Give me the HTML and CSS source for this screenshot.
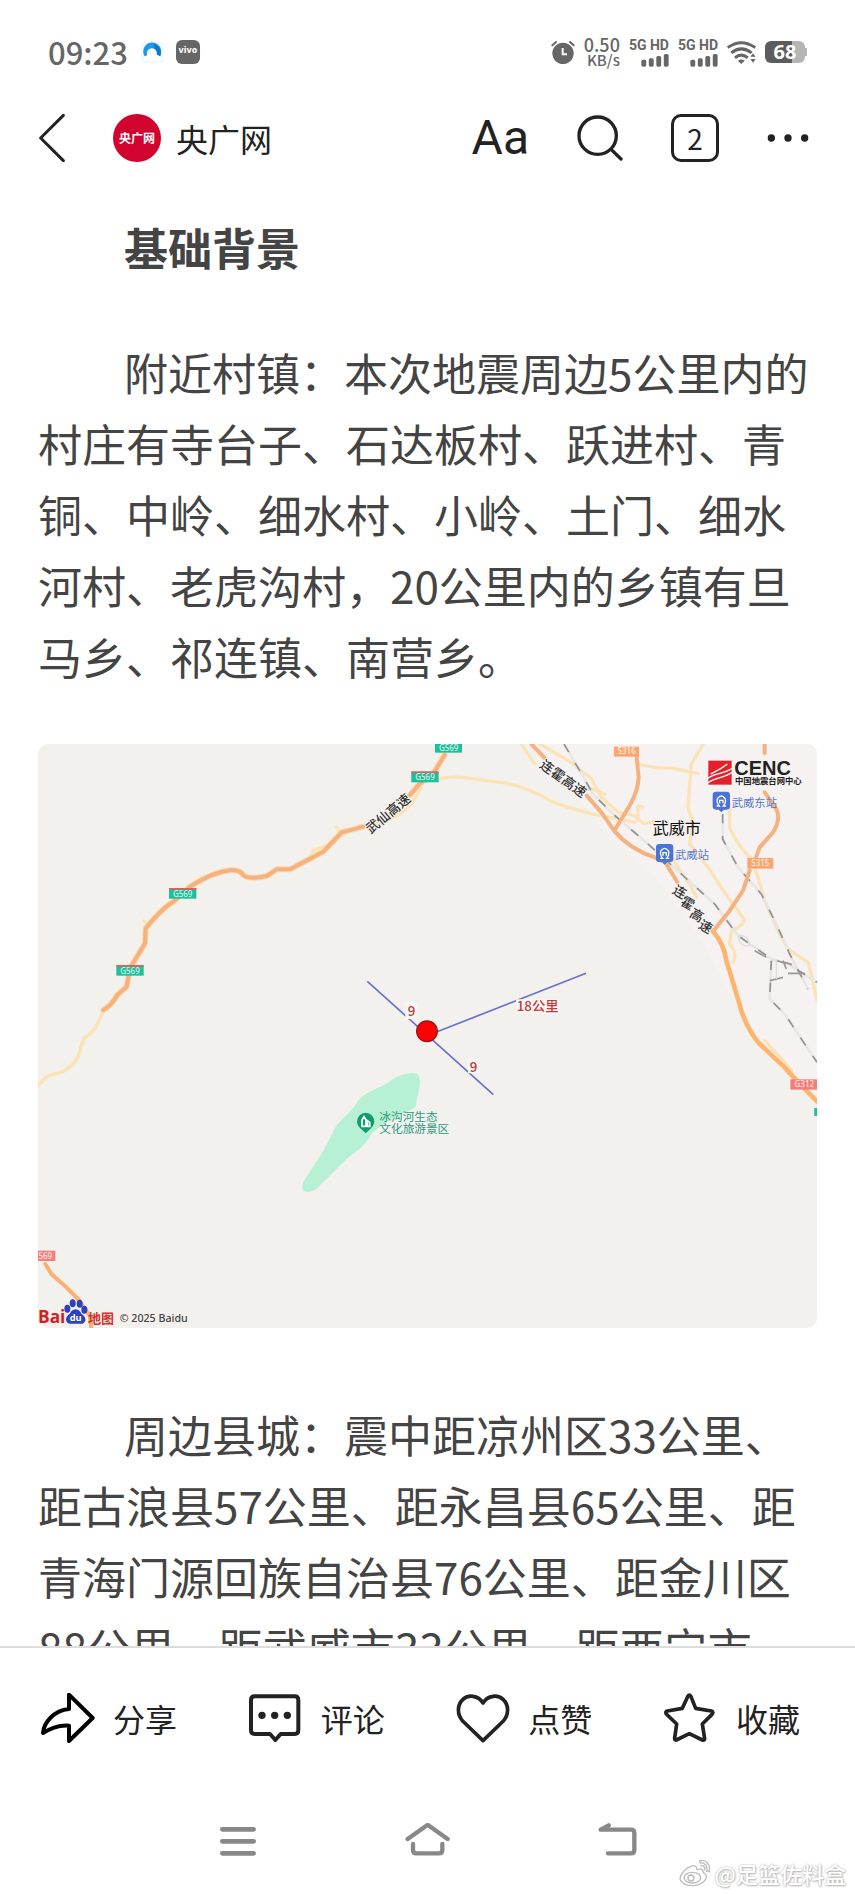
FILE: index.html
```html
<!DOCTYPE html>
<html lang="zh-CN">
<head>
<meta charset="utf-8">
<meta name="viewport" content="width=device-width">
<title>央广网</title>
<link rel="stylesheet" href="styles.css">
</head>
<body>
<div class="status">
  <div class="status-group">
    <span class="clock">09:23</span>
    <svg class="app-dot" viewBox="0 0 72 72" aria-hidden="true">
      <rect x="4" y="4" width="66" height="66" rx="8" fill="#f3f9fd"/>
      <path d="M16 52A27 27 0 1 1 60 48Z" fill="#1b9be6"/>
      <path d="M42 12A27 27 0 0 1 60 50L44 34Z" fill="#1276c8"/>
      <path d="M14 62Q6 50 22 46A15 15 0 1 1 50 44Q64 48 64 60Q60 64 50 63Z" fill="#fff"/>
    </svg>
    <span class="vivo">vivo</span>
  </div>
  <div class="status-group status-right">
    <svg class="alarm" viewBox="0 0 72 72" aria-hidden="true">
      <circle cx="36" cy="40" r="32" fill="#666"/>
      <path d="M4 16L15 6M68 16L57 6" stroke="#666" stroke-width="6" stroke-linecap="round"/>
      <path d="M35 24V43H48" stroke="#fff" stroke-width="6" fill="none"/>
    </svg>
    <div class="speed"><span>0.50</span><span class="unit">KB/s</span></div>
    <div class="sim"><span>5G HD</span>
      <svg viewBox="0 0 84 40" aria-hidden="true" fill="#666"><rect y="18" width="15" height="21" rx="5"/><rect x="23" y="13" width="15" height="26" rx="5"/><rect x="46" y="6" width="15" height="33" rx="5"/><rect x="69" width="15" height="39" rx="5"/></svg>
    </div>
    <div class="sim"><span>5G HD</span>
      <svg viewBox="0 0 84 40" aria-hidden="true" fill="#666"><rect y="18" width="15" height="21" rx="5"/><rect x="23" y="13" width="15" height="26" rx="5"/><rect x="46" y="6" width="15" height="33" rx="5"/><rect x="69" width="15" height="39" rx="5"/></svg>
    </div>
    <svg class="wifi" viewBox="0 0 88 70" aria-hidden="true">
      <g fill="none" stroke="#666" stroke-width="9"><path d="M2 20Q43 -10 86 20"/><path d="M13 36Q43 12 75 36"/><path d="M24 51Q43 35 63 51"/></g>
      <path d="M33 60Q43 52 54 60L43 70ZM71 48L79 37L87 48ZM71 55L79 66L87 55Z" fill="#666"/>
    </svg>
    <div class="battery-wrap"><div class="battery"><span>68</span></div><i class="nub"></i></div>
  </div>
</div>

<header class="top">
  <button class="plain" aria-label="返回"><svg class="back" viewBox="0 0 78 144"><path d="M73 4L5 72L73 140" fill="none" stroke="#222" stroke-width="9" stroke-linecap="round" stroke-linejoin="round"/></svg></button>
  <a class="source" href="#"><span class="logo">央广网</span><span class="name">央广网</span></a>
  <div class="tools">
    <button class="plain font-size" aria-label="字号">Aa</button>
    <button class="plain" aria-label="搜索"><svg class="search" viewBox="0 0 138 138"><g fill="none" stroke="#222" stroke-width="10" stroke-linecap="round"><circle cx="62" cy="62" r="56"/><path d="M103 104L132 132"/></g></svg></button>
    <button class="plain pages" aria-label="窗口">2</button>
    <button class="plain" aria-label="更多"><svg class="more" viewBox="0 0 126 24" fill="#222"><circle cx="13" cy="12" r="11"/><circle cx="63" cy="12" r="11"/><circle cx="113" cy="12" r="11"/></svg></button>
  </div>
</header>

<main class="article">
  <h2>基础背景</h2>
  <p>附近村镇：本次地震周边5公里内的村庄有寺台子、石达板村、跃进村、青铜、中岭、细水村、小岭、土门、细水河村、老虎沟村，20公里内的乡镇有旦马乡、祁连镇、南营乡。</p>
  <svg class="map" viewBox="0 0 2337 1752" role="img" aria-label="震中周边地图">
    <rect width="2337" height="1752" fill="#f3f1ee"/>
    <path d="M1480 0L1700 260L1850 400L1990 590L2060 720L2150 880L2337 1070V0Z" fill="#f5f2f1"/>
    <!-- minor roads -->
    <g fill="none" stroke="#fbe3b8" stroke-width="10" stroke-linecap="round" stroke-linejoin="round">
      <path d="M196 800Q170 870 140 880L128 910Q122 960 70 985L30 995L-10 1035" stroke-width="11"/>
      <path d="M1150 130L1122 178Q1080 225 1010 240M915 275L895 250M890 295L825 320L815 345M330 540L318 530"/>
      <path d="M1196 108Q1240 92 1300 104L1410 118Q1480 135 1540 172Q1620 202 1690 215L1790 235"/>
      <path d="M1505 0L1600 55L1660 105L1690 160L1740 205L1790 215L1815 238L1845 235"/>
      <path d="M1802 60Q1850 75 1900 72L1980 88M1996 0L1960 60L1950 190L1965 240L1955 300M1800 230V185L1815 190"/>
      <path d="M1955 300L2010 370L2070 460L2118 525Q2120 545 2080 560L2075 600M1900 340L1960 430L1975 460"/>
      <path d="M2075 180V250Q2095 300 2140 345L2160 400L2180 470L2220 560L2250 615L2310 655L2322 700L2337 770"/>
      <path d="M2075 600Q2100 630 2085 655M2180 890Q2220 930 2260 980"/>
      <path d="M1450 0L1490 60M1650 130L1700 150"/>
    </g>
    <!-- railways -->
    <g fill="none" stroke-linejoin="round">
      <path d="M1578 0L1625 80L1665 150L1725 210L1830 300L1930 390L2030 480L2100 575L2200 645L2250 660L2337 715M2054 210V285L2100 370L2170 450L2215 540L2255 630L2310 735M2200 650L2195 765L2240 810L2337 955" stroke="#e8e5e5" stroke-width="8"/>
      <g stroke="#929292" stroke-width="5" stroke-dasharray="28 38">
        <path d="M1578 0L1625 80L1665 150L1725 210L1830 300L1930 390L2030 480L2100 575L2200 645L2250 660L2337 715"/>
        <path d="M2054 210V285L2100 370L2170 450L2215 540L2255 630L2310 735M2200 650L2195 765L2240 810L2337 955"/>
      </g>
      <path d="M2195 710L2235 700M2250 688H2300M2235 650L2245 675M2240 655L2262 662M2150 620L2185 640" stroke="#999" stroke-width="5"/>
      <path d="M2100 575Q2105 610 2135 605Q2130 570 2100 575M2215 645V705" stroke="#ddd" stroke-width="4"/>
    </g>
    <!-- highways -->
    <g fill="none" stroke="#fbd9a8" stroke-width="18" stroke-linecap="round" stroke-linejoin="round">
      <path d="M196 798Q220 785 238 753L266 728L276 673L321 598L323 553Q370 495 406 473L456 428Q526 383 581 378Q606 378 616 393Q631 408 686 396L716 376H756L856 323L911 265L976 248M1116 153L1146 118L1185 90L1220 33"/>
    </g>
    <g fill="none" stroke="#f6b180" stroke-width="12" stroke-linecap="round" stroke-linejoin="round">
      <path d="M196 798Q220 785 238 753L266 728L276 673L321 598L323 553Q370 495 406 473L456 428Q526 383 581 378Q606 378 616 393Q631 408 686 396L716 376H756L856 323L911 265L976 248M1116 153L1146 118L1185 90L1220 33"/>
      <path d="M1480 0L1520 42M1646 155L1690 205L1730 262Q1775 315 1850 340L1880 355M1885 360L1918 415" />
      <path d="M1796 40L1802 100Q1800 140 1775 185L1732 255M2180 0V28M2180 145L2215 195Q2230 225 2205 265L2165 310L2145 365M2135 380L2115 440L2075 500L2025 562"/>
      <path d="M2025 562Q2058 600 2065 650Q2090 730 2110 800Q2130 860 2165 900L2240 970L2276 1010L2337 1072" stroke="#ffb46e" stroke-width="14"/>
      <path d="M22 1560L40 1590L80 1625L120 1665L155 1715L160 1752" stroke="#f9b074"/>
    </g>
    <path d="M2333 1092V1116" stroke="#27b896" stroke-width="8"/>
    <!-- road shields -->
    <g class="shield">
      <g fill="#1fbf9c"><rect x="1191" y="-4" width="81" height="30"/><rect x="1120" y="84" width="82" height="31"/><rect x="393" y="433" width="82" height="31"/><rect x="235" y="664" width="82" height="31"/></g>
      <path d="M1120 85H1202M393 435H475M235 666H317" stroke="#c96b64" stroke-width="6"/>
      <g fill="#f9a671"><rect x="1728" y="8" width="75" height="30"/><rect x="2128" y="342" width="78" height="32"/></g>
      <g fill="#f47f7a"><rect x="2257" y="1006" width="80" height="31"/><rect x="-4" y="1520" width="56" height="31"/></g>
      <text x="1232" y="20">G569</text><text x="1161" y="109">G569</text><text x="434" y="458">G569</text><text x="276" y="689">G569</text>
      <text x="1766" y="31">S316</text><text x="2167" y="366">S315</text><text x="2299" y="1030">G312</text><text x="22" y="1544">569</text>
    </g>
    <!-- road names -->
    <g class="road">
      <text transform="translate(1049 207) rotate(-40)">武仙高速</text>
      <text transform="translate(1577 102) rotate(36)">连霍高速</text>
      <text transform="translate(1926 442) rotate(30)">连</text><text transform="translate(1950 476) rotate(30)">霍</text><text transform="translate(1978 512) rotate(30)">高</text><text transform="translate(2004 546) rotate(30)">速</text>
    </g>
    <!-- scenic area -->
    <path d="M796 1340C785 1320 810 1295 830 1260C860 1220 870 1190 895 1145C920 1115 940 1105 960 1070C990 1035 1040 1030 1065 1005C1090 990 1120 983 1138 989C1154 1005 1142 1040 1132 1090C1100 1110 1040 1130 1000 1170C980 1210 950 1225 920 1250C880 1290 860 1310 838 1332Q815 1350 796 1340Z" fill="#b6f1d5"/>
    <path d="M983 1168L966 1152A26 26 0 1 1 1000 1152Z" fill="#0f9d6c"/>
    <path d="M972 1147V1128L978 1118L984 1128V1147M988 1147V1130L995 1135V1147M970 1147H998" fill="none" stroke="#fff" stroke-width="5"/>
    <g class="scenic"><text x="1024" y="1130">冰沟河生态</text><text x="1024" y="1168">文化旅游景区</text></g>
    <!-- distances -->
    <g stroke="#6a70cc" stroke-width="5"><path d="M988 712L1366 1052M1180 870L1644 688"/></g>
    <path d="M1102 775h38v50h-38zM1290 942h34v46h-34zM1434 766h130v44h-130z" fill="#f8f6f4"/>
    <circle cx="1167" cy="862" r="31" fill="#f00" stroke="#9c1313" stroke-width="4"/>
    <g class="distance"><text x="1121" y="815">9</text><text x="1307" y="984">9</text><text x="1499" y="802">18公里</text></g>
    <!-- stations -->
    <g fill="#4a74d6"><path d="M1864 300H1896Q1906 300 1906 310V344Q1906 354 1896 354H1888L1880 362L1872 354H1864Q1854 354 1854 344V310Q1854 300 1864 300ZM2034 143H2066Q2076 143 2076 153V187Q2076 197 2066 197H2058L2050 205L2042 197H2034Q2024 197 2024 187V153Q2024 143 2034 143Z"/></g>
    <g fill="none" stroke="#fff" stroke-width="4"><path d="M1866 343H1874Q1864 330 1869 320Q1880 306 1891 320Q1896 330 1886 343H1894M1875 335V326H1885V335M2036 186H2044Q2034 173 2039 163Q2050 149 2061 163Q2066 173 2056 186H2064M2045 178V169H2055V178"/></g>
    <text class="city" x="1916" y="271">武威市</text>
    <g class="station"><text x="1911" y="346">武威站</text><text x="2081" y="188">武威东站</text></g>
    <!-- earthquake centre logo -->
    <rect x="2011" y="50" width="70" height="72" fill="#e5202b"/>
    <path d="M2008 104C2030 86 2055 92 2084 72M2008 118C2030 100 2056 104 2084 84M2018 90C2030 84 2045 78 2068 60" fill="none" stroke="#fff" stroke-width="4"/>
    <text class="cenc" x="2089" y="94">CENC</text>
    <text class="cenc-name" x="2091" y="121">中国地震台网中心</text>
    <!-- map provider -->
    <text class="baidu" x="0" y="1737">Bai</text>
    <g fill="#2f3fc4"><ellipse cx="88" cy="1694" rx="9" ry="12"/><ellipse cx="104" cy="1678" rx="9" ry="12"/><ellipse cx="125" cy="1679" rx="9" ry="12"/><ellipse cx="139" cy="1697" rx="9" ry="12"/><path d="M113 1696Q126 1698 130 1709Q144 1718 142 1730Q138 1741 124 1739H100Q86 1740 84 1727Q84 1716 96 1709Q100 1697 113 1696Z"/></g>
    <text class="baidu-du" x="113" y="1731">du</text>
    <text class="baidu-map" x="150" y="1736">地图</text>
    <text class="copyright" x="245" y="1734">© 2025 Baidu</text>
  </svg>
  <p>周边县城：震中距凉州区33公里、距古浪县57公里、距永昌县65公里、距青海门源回族自治县76公里、距金川区88公里、距武威市33公里、距西宁市</p>
</main>

<footer class="actions">
  <button class="plain action"><svg viewBox="0 0 162 150"><path d="M84 5L155 75L84 144V98C48 96 26 108 6 120C8 90 38 52 84 48Z" fill="none" stroke="#000" stroke-width="12" stroke-linejoin="round"/></svg><span>分享</span></button>
  <button class="plain action"><svg viewBox="0 0 162 150"><path d="M17 10H137Q148 10 148 21V112Q148 123 137 123H95L79 141L63 123H17Q6 123 6 112V21Q6 10 17 10Z" fill="none" stroke="#222" stroke-width="12" stroke-linejoin="round"/><g fill="#222"><circle cx="39" cy="67" r="11"/><circle cx="77" cy="67" r="11"/><circle cx="115" cy="67" r="11"/></g></svg><span>评论</span></button>
  <button class="plain action"><svg viewBox="0 0 162 150"><path d="M81 30C66 6 36 4 20 20C2 38 4 66 20 84L81 143L142 84C158 66 160 38 142 20C126 4 96 6 81 30Z" fill="none" stroke="#222" stroke-width="11" stroke-linejoin="round"/></svg><span>点赞</span></button>
  <button class="plain action"><svg viewBox="0 0 162 150"><path d="M71 11Q76 2 81 11L95 46L142 54Q150 57 144 64L115 93L122 137Q122 143 115 141L76 122L37 141Q31 142 32 135L38 93L7 63Q3 56 10 54L55 46Z" fill="none" stroke="#222" stroke-width="11" stroke-linejoin="round"/></svg><span>收藏</span></button>
</footer>

<nav class="system">
  <button class="plain" aria-label="最近任务"><svg viewBox="0 0 144 108"><path d="M25 19H119M25 55H119M25 91H119" stroke="#888" stroke-width="14" stroke-linecap="round"/></svg></button>
  <button class="plain" aria-label="主页"><svg viewBox="0 0 144 108"><path d="M11 48L66 9Q71 5 76 9L131 48M27 63V81Q27 91 37 91H105Q115 91 115 81V63" fill="none" stroke="#888" stroke-width="13" stroke-linecap="round"/></svg></button>
  <button class="plain" aria-label="后退"><svg viewBox="0 0 144 108"><path d="M42 91H111Q121 91 121 81V30Q121 20 111 20H20L44 7" fill="none" stroke="#888" stroke-width="13" stroke-linecap="round" stroke-linejoin="round"/></svg></button>
</nav>

<div class="watermark">
  <svg viewBox="0 0 96 84" aria-hidden="true"><g fill="#fff" stroke="#bbb" stroke-width="4"><path d="M36 22C20 26 4 46 3 58C4 74 26 81 44 80C66 78 84 64 82 50C80 42 74 44 72 38C72 28 60 30 54 32C54 20 44 18 36 22Z"/><ellipse cx="40" cy="56" rx="25" ry="16"/><circle cx="36" cy="57" r="9"/><path d="M62 5C82 0 96 18 90 38L83 36C86 22 78 10 64 12ZM64 20C74 18 80 26 76 34"/></g></svg>
  <span>@足篮佐料盒</span>
</div>
</body>
</html>
```
FILE: styles.css
```css
* { box-sizing: border-box; }

body {
  margin: 0;
  height: 100vh;
  display: flex;
  flex-direction: column;
  background: #fff;
  color: #222;
  font-family: "Noto Sans CJK SC", sans-serif;
  position: relative;
  overflow: hidden;
}

svg { display: block; }

.plain {
  border: 0;
  padding: 0;
  background: none;
  color: inherit;
  font-family: inherit;
}

/* status bar */
.status {
  flex: none;
  display: flex;
  justify-content: space-between;
  align-items: center;
  height: 104px;
  padding: 0 48px;
  color: #666;
}
.status-group { display: flex; align-items: center; gap: 12px; }
.status-right { gap: 9px; }
.clock { font-size: 31px; line-height: 40px; font-weight: 500; }
.app-dot { width: 24px; height: 24px; }
.vivo {
  width: 24px;
  height: 24px;
  border-radius: 6px;
  background: #666;
  color: #fff;
  font: 700 8px/22px "DejaVu Sans", sans-serif;
  text-align: center;
}
.alarm { width: 24px; height: 24px; }
.speed {
  display: flex;
  flex-direction: column;
  align-items: flex-end;
  font-size: 18px;
  line-height: 16px;
  font-weight: 500;
}
.unit { font-size: 15px; }
.sim {
  display: flex;
  flex-direction: column;
  align-items: flex-end;
  gap: 2px;
  font: 700 14px/14px "Roboto", sans-serif;
}
.sim svg { width: 28px; height: 13px; }
.wifi { width: 29px; height: 23px; }
.battery-wrap { display: flex; align-items: center; }
.battery {
  width: 40px;
  height: 22px;
  border-radius: 6px;
  background: linear-gradient(90deg, #5c5c5c 68%, #b5b5b5 68%);
  color: #fff;
  font: 700 20px/22px "Noto Sans", sans-serif;
  text-align: center;
}
.nub { width: 2px; height: 8px; background: #b5b5b5; }

/* page header */
.top {
  flex: none;
  display: flex;
  align-items: center;
  height: 68px;
  padding: 0 46px 0 39px;
}
.back { width: 26px; height: 48px; }
.source {
  display: flex;
  align-items: center;
  gap: 15px;
  margin-left: 48px;
  color: #222;
  text-decoration: none;
}
.logo {
  width: 48px;
  height: 48px;
  border-radius: 50%;
  background: #d3032f;
  color: #fff;
  font: 700 12px/48px "Noto Sans CJK SC", sans-serif;
  text-align: center;
}
.name { font: 400 32px/48px "Noto Sans CJK SC", sans-serif; }
.tools { display: flex; align-items: center; gap: 48px; margin-left: auto; }
.font-size { font: 400 48px/56px "Roboto", sans-serif; }
.search { width: 46px; height: 46px; }
.pages {
  width: 48px;
  height: 48px;
  border: 3px solid #222;
  border-radius: 10px;
  font: 400 28px/40px "Noto Sans CJK SC", sans-serif;
}
.more { width: 42px; height: 8px; }

/* article */
.article {
  flex: 1;
  min-height: 0;
  overflow: hidden;
  padding: 40px 38px 0;
  color: #444;
  font-size: 44px;
  line-height: 71px;
}
.article h2, .article p { margin: 0; text-indent: 86px; font-size: 44px; }
.article h2 { font-weight: 700; margin-bottom: 54px; }
.map {
  width: 100%;
  height: auto;
  margin: 52px 0 71px;
  border-radius: 10px;
}
.shield text {
  font: 500 24px "Noto Sans", sans-serif;
  fill: #fff;
  fill-opacity: 0.8;
  text-anchor: middle;
}
.road text {
  font: 500 40px "Noto Sans CJK SC", sans-serif;
  fill: #333;
  stroke: #faf8f6;
  stroke-width: 4px;
  paint-order: stroke;
  text-anchor: middle;
  dominant-baseline: central;
}
.scenic { font-size: 35px; fill: #2b9c7c; }
.distance { font-size: 40px; font-weight: 500; fill: #bf3a3a; text-anchor: middle; }
.city { font-size: 48px; text-anchor: middle; fill: #111; }
.station { font-size: 34px; fill: #5578cf; }
.cenc { font: 700 60px "Liberation Sans", sans-serif; fill: #222; }
.cenc-name { font-size: 25px; font-weight: 700; fill: #222; }
.baidu { font: 700 52px "Open Sans", sans-serif; fill: #d4201f; }
.baidu-du { font: 700 28px "Open Sans", sans-serif; fill: #fff; text-anchor: middle; }
.baidu-map { font-size: 39px; font-weight: 700; fill: #d4302c; }
.copyright { font: 500 32px "Noto Sans", sans-serif; fill: #444; }

/* action bar */
.actions {
  flex: none;
  display: flex;
  justify-content: space-between;
  align-items: center;
  height: 142px;
  padding: 0 55px 0 41px;
  border-top: 2px solid #ddd;
}
.action { display: flex; align-items: center; gap: 18px; }
.action svg { width: 54px; height: 50px; }
.action span { font: 400 32px/48px "Noto Sans CJK SC", sans-serif; }

/* system navigation */
.system {
  flex: none;
  display: flex;
  justify-content: center;
  align-items: center;
  gap: 142px;
  height: 106px;
}
.system svg { width: 48px; height: 36px; }

.watermark {
  position: absolute;
  right: 9px;
  bottom: 5px;
  display: flex;
  align-items: center;
  gap: 4px;
  color: #fff;
  font: 500 22px/32px "Noto Sans CJK SC", sans-serif;
  text-shadow: 0 0 2px #aaa, 1px 1px 2px #bbb;
}
.watermark svg { width: 32px; height: 28px; }
```
